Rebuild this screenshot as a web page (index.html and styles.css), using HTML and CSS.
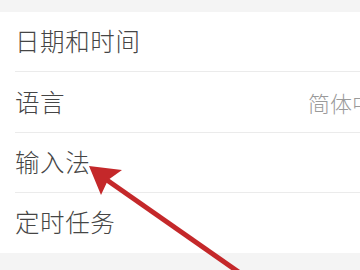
FILE: index.html
```html
<!DOCTYPE html>
<html>
<head>
<meta charset="utf-8">
<link rel="stylesheet" href="styles.css">
</head>
<body>
<div class="page">
  <div class="list">
    <div class="row"><span class="label">日期和时间</span></div>
    <div class="row"><span class="label">语言</span><span class="value">简体中文</span></div>
    <div class="row"><span class="label">输入法</span></div>
    <div class="row last"><span class="label">定时任务</span></div>
  </div>
  <svg class="arrow" width="360" height="270" viewBox="0 0 360 270">
    <line x1="104" y1="178" x2="250" y2="280" stroke="#c4282a" stroke-width="5" stroke-linecap="butt"/>
    <polygon points="89,166 122,170 108,180 101,195" fill="#c4282a"/>
  </svg>
</div>
</body>
</html>
```
FILE: styles.css
```css
html, body {
  margin: 0;
  padding: 0;
}
body {
  width: 360px;
  height: 270px;
  overflow: hidden;
  background: #f4f4f4;
  font-family: "Noto Sans CJK SC", "Noto Sans", sans-serif;
}
.page {
  position: relative;
  width: 360px;
  height: 270px;
  padding-top: 12px;
  box-sizing: border-box;
}
.list {
  background: #ffffff;
  padding-left: 15px;
  height: 241px;
  overflow: hidden;
}
.row {
  height: 59.4px;
  border-bottom: 1px solid #ebebeb;
  display: flex;
  align-items: center;
  justify-content: space-between;
  white-space: nowrap;
}
.row.last {
  border-bottom: none;
}
.label {
  font-size: 24.5px;
  color: #454545;
  font-weight: 300;
  letter-spacing: 0.6px;
  margin-top: -2px;
}
.value {
  font-size: 22px;
  color: #9a9a9a;
  font-weight: 300;
  margin-right: -36px;
}
.arrow {
  position: absolute;
  left: 0;
  top: 0;
}
```
